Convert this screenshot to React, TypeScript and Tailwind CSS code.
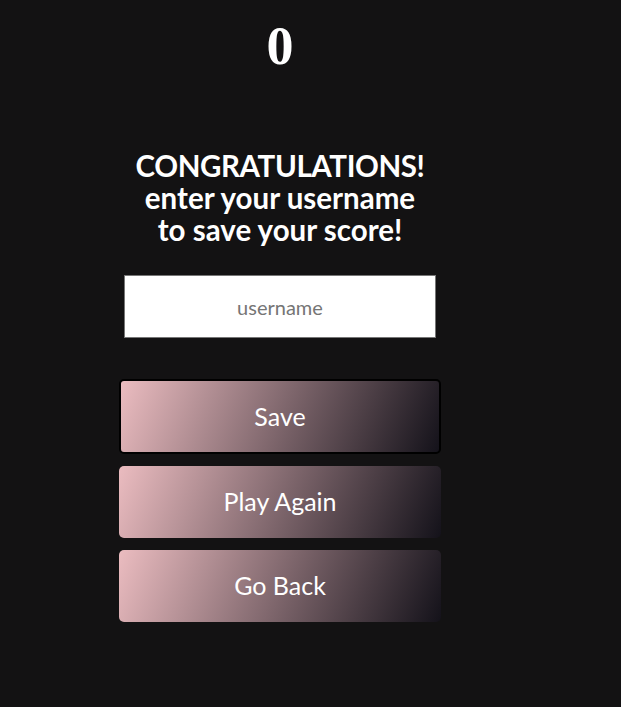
const buttons = ["Save", "Play Again", "Go Back"];

const App = () => {
  return (
    <div className="min-h-[707px] bg-[#131213] text-white font-['Lato','Noto_Sans',sans-serif]">
      <div className="w-[560px] flex flex-col items-center">
        {/* Score */}
        <h1 className="mt-[14px] h-[64px] text-[54px] leading-[64px] font-bold font-['Liberation_Serif',serif]">
          0
        </h1>

        {/* Message */}
        <h2 className="mt-[72px] text-center text-[29.5px] leading-[32px] font-bold">
          <span className="tracking-[-0.4px]">CONGRATULATIONS!</span>
          <br />
          enter your username
          <br />
          to save your score!
        </h2>

        {/* Username input */}
        <input
          type="text"
          placeholder="username"
          className="mt-[29px] w-[312px] h-[63px] bg-white border border-[#767676] text-center text-[20px] text-black placeholder:text-[#757575] outline-none"
        />

        {/* Actions */}
        <div className="mt-[41px] flex flex-col gap-[12px] w-[322px]">
          {buttons.map((label, i) => (
            <button
              key={label}
              className={
                "w-full rounded-[5px] bg-[linear-gradient(112deg,#ebbcc0_0%,#14121a_100%)] text-[25px] text-white " +
                (i === 0 ? "h-[75px] border-2 border-black" : "h-[72px]")
              }
            >
              {label}
            </button>
          ))}
        </div>
      </div>
    </div>
  );
};

export default App;
